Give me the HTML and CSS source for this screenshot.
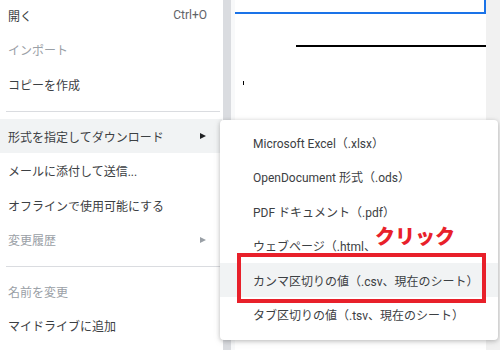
FILE: index.html
```html
<!DOCTYPE html>
<html lang="ja">
<head>
<meta charset="utf-8">
<title>ダウンロード</title>
<link rel="stylesheet" href="styles.css">
</head>
<body>
<div class="page">
  <div class="menu">
    <div class="row"><span>開く</span><span class="shortcut">Ctrl+O</span></div>
    <div class="row disabled"><span>インポート</span></div>
    <div class="row"><span>コピーを作成</span></div>
    <div class="divider"></div>
    <div class="row active"><span>形式を指定してダウンロード</span><span class="arrow"></span></div>
    <div class="row"><span>メールに添付して送信...</span></div>
    <div class="row"><span>オフラインで使用可能にする</span></div>
    <div class="row disabled"><span>変更履歴</span><span class="arrow"></span></div>
    <div class="divider second"></div>
    <div class="row disabled"><span>名前を変更</span></div>
    <div class="row"><span>マイドライブに追加</span></div>
  </div>
  <div class="strip"></div>
  <div class="sheet">
    <div class="cell-box"></div>
    <div class="rule"></div>
    <div class="tick"></div>
  </div>
  <div class="edge"></div>

  <div class="submenu">
    <div class="sub-row">Microsoft Excel（.xlsx）</div>
    <div class="sub-row">OpenDocument 形式（.ods）</div>
    <div class="sub-row">PDF ドキュメント（.pdf）</div>
    <div class="sub-row">ウェブページ（.html、</div>
    <div class="sub-row active">カンマ区切りの値（.csv、現在のシート）</div>
    <div class="sub-row">タブ区切りの値（.tsv、現在のシート）</div>
  </div>
  <div class="highlight-box"></div>
  <div class="click-label">クリック</div>
</div>
</body>
</html>
```

FILE: styles.css
```css
html, body {
  margin: 0;
  padding: 0;
  background: #ffffff;
}
body {
  font-family: Roboto, "Noto Sans CJK JP", "Noto Sans", sans-serif;
  font-size: 12px;
  color: #3c4043;
  overflow: hidden;
}
.page {
  position: relative;
  width: 500px;
  height: 350px;
  display: grid;
  grid-template-columns: 223px 8px 255px 14px;
  overflow: hidden;
}
.menu {
  background: #ffffff;
  margin-top: -2.25px;
  display: flex;
  flex-direction: column;
}
.row {
  height: 34.5px;
  flex: 0 0 34.5px;
  display: flex;
  align-items: center;
  justify-content: space-between;
  padding: 0 15px 0 8px;
  margin-right: 1px;
}
.row.active {
  background: #f1f3f4;
}
.row.disabled {
  color: #9aa0a6;
}
.shortcut {
  color: #5f6368;
}
.arrow {
  width: 0;
  height: 0;
  border-left: 6px solid #202124;
  border-top: 3.5px solid transparent;
  border-bottom: 3.5px solid transparent;
  margin-right: 1px;
}
.row.disabled .arrow {
  border-left-color: #9aa0a6;
}
.divider {
  height: 1px;
  flex: 0 0 1px;
  background: #dadce0;
  margin: 9.5px 3px 7px 6px;
}
.divider.second {
  margin: 9px 3px 7px 6px;
}
.strip {
  background: #dadce0;
}
.sheet {
  background: #ffffff;
  display: flex;
  flex-direction: column;
  border-left: 4px solid #f8f9fa;
}
.cell-box {
  height: 12px;
  margin-left: 0;
  border-bottom: 2px solid #1a73e8;
  border-right: 2px solid #1a73e8;
}
.rule {
  height: 1.5px;
  background: #000000;
  margin: 31px 0 0 61px;
}
.tick {
  width: 1px;
  height: 4px;
  background: #000000;
  margin: 34px 0 0 8px;
}
.edge {
  background: #f1f1f1;
}
.submenu {
  position: absolute;
  left: 220px;
  top: 120px;
  width: 278px;
  height: 220px;
  box-sizing: border-box;
  padding-top: 4.75px;
  background: #ffffff;
  border-radius: 4px;
  box-shadow: 0 1px 4px rgba(0, 0, 0, 0.22), 0 2px 8px rgba(0, 0, 0, 0.08);
}
.sub-row {
  height: 34.5px;
  display: flex;
  align-items: center;
  padding-left: 33px;
  white-space: nowrap;
}
.sub-row.active {
  background: #f1f3f4;
}
.highlight-box {
  position: absolute;
  left: 237px;
  top: 253px;
  width: 241px;
  height: 42px;
  border: 4px solid #e8202a;
}
.click-label {
  position: absolute;
  left: 373px;
  top: 223px;
  padding: 0 2px;
  color: #e8202a;
  font-family: "Noto Sans CJK JP", sans-serif;
  font-weight: 900;
  font-size: 20px;
  line-height: 26px;
}
```
